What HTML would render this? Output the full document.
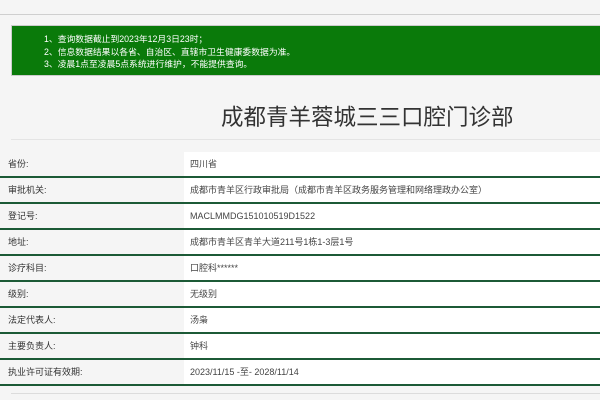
<!DOCTYPE html>
<html><head><meta charset="utf-8"><style>
*{margin:0;padding:0;box-sizing:border-box}
body{width:600px;height:400px;background:#f5f5f5;font-family:"Liberation Sans","Noto Sans CJK SC",sans-serif;position:relative;overflow:hidden}
.top{position:absolute;left:0;top:14px;width:600px;height:1px;background:#cfcfcf}
.notice{position:absolute;left:11px;top:25px;width:600px;height:51px;background:#0a7a0a;border:1px solid #ccc;color:#fff;font-size:8.8px;line-height:12.5px;padding:7px 0 0 32px}
h1{position:absolute;left:221px;top:100px;font-size:22.5px;font-weight:normal;color:#333;letter-spacing:0;white-space:nowrap}
.hl{position:absolute;left:11px;top:139px;width:600px;height:1px;background:#e4e4e4}
.bl{position:absolute;left:11px;top:393px;width:600px;height:1px;background:#dcdcdc}
.tbl{position:absolute;left:0;top:152px;width:600px}
.r{height:26px;border-bottom:2px solid #1c5a36;display:flex;font-size:9px;color:#333}
.r .k{width:184px;padding-left:8px;line-height:24px}
.r .v{flex:1;background:#fff;padding-left:6px;line-height:24px;color:#444}
</style></head><body>
<div class="top"></div>
<div class="notice">1、查询数据截止到2023年12月3日23时；<br>2、信息数据结果以各省、自治区、直辖市卫生健康委数据为准。<br>3、凌晨1点至凌晨5点系统进行维护，不能提供查询。</div>
<h1>成都青羊蓉城三三口腔门诊部</h1>
<div class="hl"></div>
<div class="tbl">
<div class="r"><div class="k">省份:</div><div class="v">四川省</div></div>
<div class="r"><div class="k">审批机关:</div><div class="v">成都市青羊区行政审批局（成都市青羊区政务服务管理和网络理政办公室）</div></div>
<div class="r"><div class="k">登记号:</div><div class="v">MACLMMDG151010519D1522</div></div>
<div class="r"><div class="k">地址:</div><div class="v">成都市青羊区青羊大道211号1栋1-3层1号</div></div>
<div class="r"><div class="k">诊疗科目:</div><div class="v">口腔科******</div></div>
<div class="r"><div class="k">级别:</div><div class="v">无级别</div></div>
<div class="r"><div class="k">法定代表人:</div><div class="v">汤枭</div></div>
<div class="r"><div class="k">主要负责人:</div><div class="v">钟科</div></div>
<div class="r"><div class="k">执业许可证有效期:</div><div class="v">2023/11/15 -至- 2028/11/14</div></div>
</div>
<div class="bl"></div>
</body></html>
